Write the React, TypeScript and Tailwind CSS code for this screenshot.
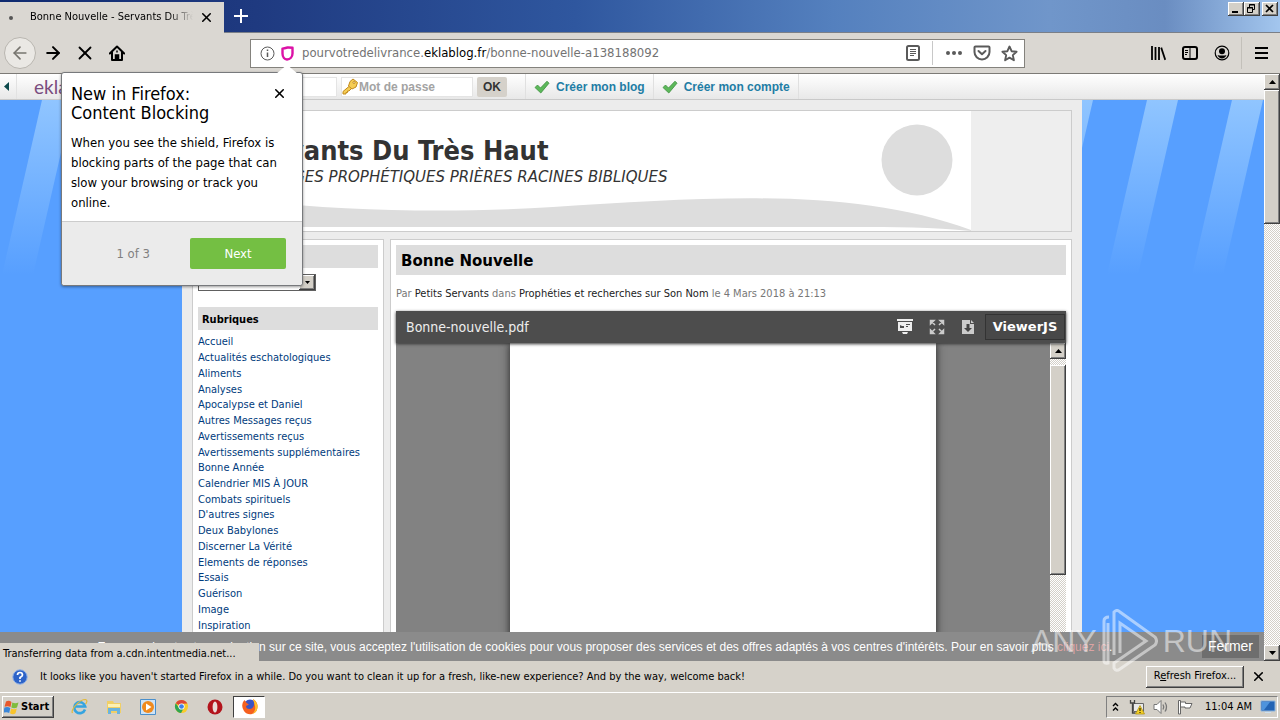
import React from 'react';
import { ArrowLeft, ArrowRight, X } from 'lucide-react';

const RAISED =
  'bg-[#d4d0c8] shadow-[inset_-1px_-1px_#404040,inset_1px_1px_#fff,inset_-2px_-2px_#808080]';

const CATEGORIES = [
  'Accueil',
  'Actualités eschatologiques',
  'Aliments',
  'Analyses',
  'Apocalypse et Daniel',
  'Autres Messages reçus',
  'Avertissements reçus',
  'Avertissements supplémentaires',
  'Bonne Année',
  'Calendrier MIS À JOUR',
  'Combats spirituels',
  "D'autres signes",
  'Deux Babylones',
  'Discerner La Vérité',
  'Elements de réponses',
  'Essais',
  'Guérison',
  'Image',
  'Inspiration',
];

interface ScrollbarProps {
  thumb: string;
  bottomArrow?: boolean;
}

const Scrollbar: React.FC<ScrollbarProps> = ({ thumb, bottomArrow }) => (
  <div className="flex w-4 shrink-0 flex-col bg-[conic-gradient(#fff_25%,#d4d0c8_0_50%,#fff_0_75%,#d4d0c8_0)] bg-size-[2px_2px]">
    <button aria-label="Scroll up" className={`flex h-4 w-full shrink-0 items-center justify-center ${RAISED}`}>
      <svg width="7" height="4" viewBox="0 0 7 4"><path d="M3.5 0 7 4H0z" /></svg>
    </button>
    <div className={`w-full ${thumb} ${RAISED}`} />
    {bottomArrow && (
      <button aria-label="Scroll down" className={`mt-auto flex h-4 w-full shrink-0 items-center justify-center ${RAISED}`}>
        <svg width="7" height="4" viewBox="0 0 7 4"><path d="M3.5 4 7 0H0z" /></svg>
      </button>
    )}
  </div>
);

const TitleBar: React.FC = () => (
  <header className="flex h-[33px] shrink-0 border-b border-[#7a7f88] bg-[linear-gradient(90deg,#0f2a70_0%,#1f3a80_20%,#2f579f_45%,#5480be_65%,#7096ca_82%,#6a8dc1_91%,#a3c6ee_100%)]">
    <div className="mt-[2px] flex h-[31px] w-[224px] items-center bg-[#dad7d2] pr-[10px] pl-[9px] text-[11px]">
      <span className="mr-[17px] size-1 rounded-full bg-[#555]" />
      <span className="flex-1 overflow-hidden whitespace-nowrap [mask-image:linear-gradient(90deg,#000_85%,transparent)]">
        Bonne Nouvelle - Servants Du Très Haut
      </span>
      <button aria-label="Close tab" className="ml-[6px]">
        <X size={15} strokeWidth={2.5} />
      </button>
    </div>
    <button aria-label="New tab" className="flex w-[33px] items-center justify-center text-white">
      <svg width="14" height="14" viewBox="0 0 14 14" stroke="currentColor" strokeWidth="2"><path d="M7 0v14M0 7h14" /></svg>
    </button>
    <div className="ml-auto flex pt-[2px] pr-[2px]">
      <button aria-label="Minimize" className={`flex h-[14px] w-4 items-center justify-center ${RAISED}`}>
        <svg width="16" height="14" viewBox="0 0 16 14"><path d="M4 9h6v2H4z" /></svg>
      </button>
      <button aria-label="Restore" className={`flex h-[14px] w-4 items-center justify-center ${RAISED}`}>
        <svg width="16" height="14" viewBox="0 0 16 14" fill="none" stroke="#000">
          <path d="M5.500 5V2.500h5v5H9M5 3h6M3.500 5.500h5v5h-5zM3 6h6" />
        </svg>
      </button>
      <button aria-label="Close" className={`ml-[2px] flex h-[14px] w-4 items-center justify-center ${RAISED}`}>
        <svg width="16" height="14" viewBox="0 0 16 14" stroke="#000" strokeWidth="1.700"><path d="m4 3 7 7M11 3l-7 7" /></svg>
      </button>
    </div>
  </header>
);

const NavBar: React.FC = () => (
  <nav className="flex h-[41px] shrink-0 items-center border-b border-[#7c7a76] bg-[#dad7d2] pl-1">
    <button aria-label="Back" className="flex size-8 items-center justify-center rounded-full border border-[#b9b6b0] bg-[#eae8e4] text-[#77756f]">
      <ArrowLeft size={20} />
    </button>
    <button aria-label="Forward" className="ml-[7px]"><ArrowRight size={20} strokeWidth={2.400} /></button>
    <button aria-label="Stop" className="ml-[11px]"><X size={22} strokeWidth={2} /></button>
    <button aria-label="Home" className="ml-[13px]">
      <svg width="16" height="16" viewBox="0 0 16 16" fill="none" stroke="#000" strokeWidth="2">
        <path d="M.800 8.500 8 1.500l7.200 7M3 7v8h10V7" strokeLinejoin="round" strokeLinecap="round" />
        <path d="M6.500 14.500V10h3v4.500zM8 5.500v2" fill="#000" strokeWidth="1.500" />
      </svg>
    </button>

    <div className="ml-[125px] flex h-[29px] min-w-0 flex-1 items-center border border-[#84827d] bg-white pr-[6px] pl-[9px] text-[#5a5a5a]">
      <svg width="15" height="15" viewBox="0 0 15 15" fill="none" stroke="currentColor">
        <circle cx="7.500" cy="7.500" r="6.500" /><path d="M7.500 6.500v4.500M7.500 3.500v1.600" strokeWidth="1.500" />
      </svg>
      <svg className="ml-[6px]" width="13" height="15" viewBox="0 0 13 15" fill="none" stroke="#dc11a6" strokeWidth="2.400" strokeLinejoin="round">
        <path d="M6.500 1.500C4.600 2 3 2.400 1.500 2.600V7.500c0 3.500 2 5.800 4.500 6 3-.2 5.500-2.500 5.500-6V1.800C10 1.600 8.400 1.400 6.500 1.500z" />
      </svg>
      <a href="#" className="ml-[8px] flex-1 truncate text-[13px] text-[#737373]">
        pourvotredelivrance.<span className="text-black">eklablog.fr</span>/bonne-nouvelle-a138188092
      </a>
      <button aria-label="Reader view">
        <svg width="14" height="16" viewBox="0 0 14 16" fill="none" stroke="currentColor">
          <rect x="1" y="1" width="12" height="14" rx="1.500" strokeWidth="2" />
          <path d="M4 4.500h6M4 6.500h6M4 8.500h6M4 10.500h4" />
        </svg>
      </button>
      <span className="mx-[12px] h-6 w-px bg-[#c8c8c8]" />
      <button aria-label="Page actions">
        <svg width="18" height="16" viewBox="0 0 18 16" fill="currentColor">
          <circle cx="3" cy="8" r="2" /><circle cx="9" cy="8" r="2" /><circle cx="15" cy="8" r="2" />
        </svg>
      </button>
      <button aria-label="Save to Pocket" className="ml-[10px]">
        <svg width="18" height="16" viewBox="0 0 18 16" fill="none" stroke="currentColor" strokeWidth="2" strokeLinejoin="round" strokeLinecap="round">
          <path d="M2.500 1.500h13a1 1 0 0 1 1 1V7a7.500 7.500 0 0 1-15 0V2.500a1 1 0 0 1 1-1z" /><path d="m5.500 6 3.500 3.200L12.500 6" />
        </svg>
      </button>
      <button aria-label="Bookmark" className="ml-[10px]">
        <svg width="17" height="17" viewBox="0 0 17 17" fill="none" stroke="currentColor" strokeWidth="1.900" strokeLinejoin="round">
          <path d="m8.500 1.500 2.100 4.700 5 .5-3.800 3.400 1.100 5.100-4.400-2.600-4.400 2.600 1.100-5.100L1.400 6.700l5-.5z" />
        </svg>
      </button>
    </div>

    <div className="ml-[125px] flex items-center pr-[12px]">
      <button aria-label="Library">
        <svg width="16" height="16" viewBox="0 0 16 16" stroke="#000" strokeWidth="2" strokeLinecap="square">
          <path d="M2 2v12M5.500 3v11M9 3v11M11.500 3.500 15 14" strokeWidth="1.800" />
        </svg>
      </button>
      <button aria-label="Sidebars" className="ml-[16px]">
        <svg width="16" height="16" viewBox="0 0 16 16" fill="none" stroke="#000">
          <rect x="1" y="2" width="14" height="12" rx="2" strokeWidth="2" /><path d="M8 2v12M3 5.500h3M3 7.500h3M3 9.500h2" />
        </svg>
      </button>
      <button aria-label="Account" className="ml-[16px]">
        <svg width="16" height="16" viewBox="0 0 16 16">
          <circle cx="8" cy="8" r="6.800" fill="none" stroke="#000" strokeWidth="1.200" />
          <circle cx="8" cy="6.200" r="3" /><path d="M3.500 10c1.500.8 7.500.8 9 0-.8 2.400-2.500 3.400-4.500 3.400S4.300 12.400 3.500 10z" />
        </svg>
      </button>
      <span className="ml-[11px] h-8 w-px bg-[#c3c0ba]" />
      <button aria-label="Menu" className="ml-[13px]">
        <svg width="13" height="13" viewBox="0 0 13 13"><path d="M0 0h13v2H0zM0 5h13v2H0zM0 10h13v2H0z" /></svg>
      </button>
    </div>
  </nav>
);

const CheckIcon: React.FC = () => (
  <svg width="16" height="14" viewBox="0 0 16 14">
    <path d="M1 7.500 3.500 5l3 3L13 1.200 15 3.200 6.800 13z" fill="#5cb85a" stroke="#3c8f3e" strokeWidth=".800" />
  </svg>
);

const EklaBar: React.FC = () => (
  <div className="relative flex h-[26px] shrink-0 items-center border-b border-[#c9c9c9] bg-linear-to-b from-white to-[#e8e8e8] font-['Liberation_Sans',sans-serif] text-[12px] font-bold">
    <span className="flex h-full w-[17px] items-center border-r border-[#e2e2e2] pl-1">
      <svg width="5" height="9" viewBox="0 0 5 9"><path d="M5 0v9L0 4.500z" fill="#0d4a4c" /></svg>
    </span>
    <a href="#" className="ml-[17px] w-[119px] font-[Lato,sans-serif] text-[19px] leading-5 font-normal text-[#7a4d7e]">eklablog</a>
    <input aria-label="Identifiant" className="mr-1 ml-[53px] h-5 w-[131px] border border-[#e4e4e4] bg-white" />
    <label className="flex h-5 w-[132px] items-center border border-[#e4e4e4] bg-white">
      <svg className="shrink-0" width="17" height="17" viewBox="0 0 17 17" fill="#f5cd55" stroke="#c28a1c">
        <path d="M7.500 8 1 13.500V16h3v-1.500h1.500V13H7l2.500-2.500" />
        <path d="M8 3.500 11 1l4.500 3.500L14 9l-4 2-3.500-3z" /><circle cx="12" cy="4.500" r="1" fill="#fff" />
      </svg>
      <input type="password" aria-label="Mot de passe" placeholder="Mot de passe" className="w-full min-w-0 outline-none placeholder:text-[#a3a3a3]" />
    </label>
    <button className="ml-[4px] h-5 w-[30px] rounded-xs bg-[#d5d1ca] text-[#333]">OK</button>
    <div className="ml-[18px] flex h-full items-center border-l border-[#e0e0e0] text-[#1f7da5]">
      <a href="#" className="flex h-full items-center gap-[6px] border-r border-[#e0e0e0] px-2"><CheckIcon />Créer mon blog</a>
      <a href="#" className="flex h-full items-center gap-[6px] border-r border-[#e0e0e0] px-2"><CheckIcon />Créer mon compte</a>
    </div>
  </div>
);

const Stripes: React.FC = () => (
  <svg className="absolute top-0 left-0 h-[180px] w-full" aria-hidden="true">
    <defs>
      <linearGradient id="stripe" x1="0" y1="0" x2="0" y2="1">
        <stop offset="0" stopColor="#90c5ff" />
        <stop offset="1" stopColor="#90c5ff" stopOpacity="0" />
      </linearGradient>
    </defs>
    {Array.from({ length: 24 }, (_, i) => (
      <path key={i} d="M42 0h31L33 175H2z" transform={`translate(${i * 85})`} fill="url(#stripe)" />
    ))}
  </svg>
);

const BlogHeader: React.FC = () => (
  <div className="relative h-[122px] shrink-0 border border-[#ccc] bg-[#eee]">
    <svg className="absolute top-0 left-0" width="778" height="120" viewBox="0 0 778 120" aria-hidden="true">
      <path d="M0 0h778v120H0z" fill="#fff" />
      <path d="M0 84C120 98 230 104 360 96 520 86 660 76 778 119v1C740 116 700 116 660 116H0z" fill="#ddd" />
      <circle cx="724" cy="49" r="35.500" fill="#ddd" />
    </svg>
    <div className="relative pt-[24px] pl-[49px] text-[#333]">
      <h1 className="text-[27px] leading-8 font-bold">Servants Du Très Haut</h1>
      <p className="font-['DejaVu_Sans',sans-serif] text-[15px] leading-5 italic">MESSAGES PROPHÉTIQUES PRIÈRES RACINES BIBLIQUES</p>
    </div>
  </div>
);

const Sidebar: React.FC = () => (
  <aside className="w-[192px] shrink-0 border border-[#ccc] bg-white p-[5px]">
    <h2 className="h-[23px] bg-[#ddd] px-1 text-[11px] leading-[26px] font-bold">Archives</h2>
    <div className="relative mt-[6px] h-[17px] w-[118px]">
      <select aria-label="Archives" className="block h-[17px] w-full appearance-none border border-[#606060] bg-white px-1 text-[11px] leading-[15px]">
        <option>Choisir le mois</option>
      </select>
      <span className={`pointer-events-none absolute top-px right-px flex h-[15px] w-4 items-center justify-center ${RAISED}`}>
        <svg width="5" height="3" viewBox="0 0 5 3"><path d="M0 0h5L2.500 3z" /></svg>
      </span>
    </div>
    <h2 className="mt-[16px] h-[23px] bg-[#ddd] px-1 text-[11px] leading-[26px] font-bold">Rubriques</h2>
    <ul className="mt-1 grid h-[299px] auto-rows-fr items-center text-[11px] leading-none whitespace-nowrap text-[#003b7d]">
      {CATEGORIES.map((name) => (
        <li key={name}><a href="#">{name}</a></li>
      ))}
    </ul>
  </aside>
);

const PdfViewer: React.FC = () => (
  <div className="mt-2 flex min-h-0 flex-1 flex-col">
    <div className="z-10 flex h-8 shrink-0 items-center bg-[#4d4d4d] pr-px pl-[10px] text-white shadow-[0_1px_3px_#333]">
      <span className="flex-1 text-[14px] text-[#eee]">Bonne-nouvelle.pdf</span>
      <button aria-label="Presentation">
        <svg width="16" height="16" viewBox="0 0 16 16" fill="#eee">
          <path d="M0 0h16v2H0zM1 3h14v9H1zM5 13h6l-1 2H6z" /><path d="M3 6v3h4V7H5zM9 5h4v1H9zM9 7h2v1H9z" fill="#4d4d4d" />
        </svg>
      </button>
      <button aria-label="Fullscreen" className="ml-[16px]">
        <svg width="16" height="16" viewBox="0 0 16 16" fill="#ccc" stroke="#ccc" strokeWidth="1.500">
          <path d="M1.500 5V1.500H5zM11 1.500h3.500V5zM1.500 11v3.500H5zM14.500 11v3.500H11zM2 2l4 4M14 2l-4 4M2 14l4-4M14 14l-4-4" />
        </svg>
      </button>
      <button aria-label="Download" className="ml-[16px]">
        <svg width="14" height="16" viewBox="0 0 14 16" fill="#ccc">
          <path d="M1 1h8v4h4v10H1zM10 1l3 3h-3z" /><path d="M5.500 5h3v4H11l-4 4-4-4h2.500z" fill="#444" />
        </svg>
      </button>
      <button className="ml-[10px] h-[26px] w-20 border border-[#333] bg-[#484848] font-['DejaVu_Sans',sans-serif] text-[13px] font-bold">ViewerJS</button>
    </div>
    <div className="flex min-h-0 flex-1 bg-[#828282]">
      <div className="flex flex-1 justify-center overflow-hidden">
        <div className="w-[426px] bg-white shadow-[0_0_8px_#222]" />
      </div>
      <Scrollbar thumb="mt-[6px] h-[210px]" />
    </div>
  </div>
);

const Article: React.FC = () => (
  <main className="ml-[6px] flex min-h-0 min-w-0 flex-1 flex-col border border-[#ccc] bg-white px-[5px] pt-[5px]">
    <h2 className="h-[30px] shrink-0 bg-[#ddd] px-[5px] font-['DejaVu_Sans',sans-serif] text-[15px] leading-[32px] font-bold">Bonne Nouvelle</h2>
    <p className="mt-[10px] text-[11px] leading-[18px] text-[#777]">
      Par <a href="#" className="text-[#222]">Petits Servants</a> dans{' '}
      <a href="#" className="text-[#222]">Prophéties et recherches sur Son Nom</a> le 4 Mars 2018 à 21:13
    </p>
    <PdfViewer />
  </main>
);

const CookieBar: React.FC = () => (
  <div className="absolute inset-x-0 bottom-0 flex h-[29px] items-center justify-center bg-[#8b8b8b] pr-[54px] font-['Liberation_Sans',sans-serif] text-[12px] text-white">
    <p className="whitespace-nowrap">
      En poursuivant votre navigation sur ce site, vous acceptez l'utilisation de cookies pour vous proposer des services et des
      offres adaptés à vos centres d'intérêts. Pour en savoir plus <a href="#" className="text-[#dba3a3]">cliquez ici</a>.
    </p>
    <button className="absolute right-[5px] h-[23px] bg-[#6e6e6e] px-[6px] text-[14px]">Fermer</button>
  </div>
);

const Popup: React.FC = () => (
  <div role="dialog" aria-labelledby="tour-title" className="absolute top-[72px] left-[61px] z-30 w-[242px] rounded-[3px] border border-[#77797c] bg-white shadow-[0_1px_3px_#0006]">
    <svg className="absolute -top-[9px] left-[214px]" width="22" height="11" viewBox="0 0 22 11">
      <path d="M0 10 11 .700 22 10v1H0z" fill="#fff" />
    </svg>
    <div className="px-[9px] pt-[11px] pb-2">
      <div className="flex items-start justify-between">
        <h2 id="tour-title" className="text-[18px] leading-[19px]">New in Firefox:<br />Content Blocking</h2>
        <button aria-label="Close" className="mt-[2px] mr-[6px]"><X size={15} strokeWidth={2.500} /></button>
      </div>
      <p className="mt-[11px] text-[13px] leading-5">
        When you see the shield, Firefox is<br />blocking parts of the page that can<br />slow your browsing or track you<br />online.
      </p>
    </div>
    <div className="flex h-[64px] items-center justify-end rounded-b-[3px] border-t border-[#ccc] bg-[#ebebeb] pr-4 text-[13px]">
      <span className="mr-[40px] text-[#808080]">1 of 3</span>
      <button className="h-[31px] w-24 rounded-xs bg-[#74bf43] text-white">Next</button>
    </div>
  </div>
);

const Watermark: React.FC = () => (
  <div className="pointer-events-none absolute right-[48px] bottom-[47px] z-40 flex items-center gap-[5px] font-['Liberation_Sans',sans-serif] text-[32px] leading-[64px] text-white/50">
    <span>ANY</span>
    <svg width="56" height="64" viewBox="0 0 56 64" fill="none" stroke="currentColor" strokeWidth="3">
      <path d="M12 46V3q3-3 6 0l35 25q3 4 0 8L18 60q-4 3-6-1v-5l32-22-26-18v30M7 8q-5 0-5 4v40q0 3 4 2V14" />
    </svg>
    <span>RUN</span>
  </div>
);

const InfoBar: React.FC = () => (
  <div className="flex h-[31px] shrink-0 items-center bg-[#d6d2ca] pr-[14px] pl-[12px] text-[11px]">
    <svg width="16" height="16" viewBox="0 0 16 16">
      <circle cx="8" cy="8" r="7.200" fill="#2d63c8" stroke="#8fb0e6" />
      <path d="M5.500 6q0-2.500 2.500-2.500T10.500 6Q10.500 7.200 8 8.500V10M8 11.200v1.600" fill="none" stroke="#fff" strokeWidth="1.700" />
    </svg>
    <p className="ml-[12px] flex-1 pt-[2px] whitespace-nowrap">
      It looks like you haven't started Firefox in a while. Do you want to clean it up for a fresh, like-new experience? And by the way, welcome back!
    </p>
    <button className={`h-[22px] w-[98px] whitespace-nowrap ${RAISED}`}>R<u>e</u>fresh Firefox...</button>
    <button aria-label="Dismiss" className="ml-[7px]"><X size={15} strokeWidth={2.500} /></button>
  </div>
);

const Taskbar: React.FC = () => (
  <footer className="flex h-[28px] shrink-0 items-center border-t border-white bg-[#d4d0c8] px-[2px] text-[11px]">
    <button className={`flex h-[22px] w-[52px] items-center gap-[2px] pt-px pl-[2px] font-bold ${RAISED}`}>
      <svg width="15" height="15" viewBox="0 0 15 15">
        <path d="M2 1.500Q5 0 7.500 2L6.500 7Q4 5.500.500 6.700z" fill="#e8582c" /><path d="M8.300 2.400Q11 4 14.500 2.500L13 7.500Q10 9 7.300 7.400z" fill="#7fbc3c" />
        <path d="M.400 7.600Q3.500 6.200 6.300 8L5.200 13Q3 11.500-.500 12.700z" fill="#3a86d8" /><path d="M7.200 8.400Q9.500 10 12.800 8.500L11.500 13.300Q9 15 6 13.300z" fill="#f8c42c" />
      </svg>
      Start
    </button>
    <div className="ml-[17px] flex items-center gap-[18px]">
      <button aria-label="Internet Explorer">
        <svg width="17" height="17" viewBox="0 0 17 17" fill="none">
          <path d="M14 11.500A5.500 5.500 0 1 1 14.200 8.500H4" stroke="#35a4e0" strokeWidth="2.600" />
          <path d="M1.500 15C-.500 12 8 1.500 14.500 1.500 17 2 15.500 5 14.500 6" stroke="#e2b93a" strokeWidth="1.200" />
        </svg>
      </button>
      <button aria-label="Explorer">
        <svg width="16" height="16" viewBox="0 0 16 16">
          <path d="M1 2h6l1 2h7v10H1z" fill="#f0cf67" /><path d="M2 5h12v3H2z" fill="#fdf1b4" /><path d="M2 15V9h12v6h-3v-3H5v3z" fill="#6bb3de" />
        </svg>
      </button>
      <button aria-label="Media Player">
        <svg width="16" height="16" viewBox="0 0 16 16">
          <path d="M.500.500h15v15H.500z" fill="#cfe3f5" stroke="#4a8fcb" /><circle cx="8" cy="8" r="6" fill="#f08a1d" /><path d="m6 4.500 5.500 3.500L6 11.500z" fill="#fff" />
        </svg>
      </button>
      <button aria-label="Chrome">
        <svg width="15" height="15" viewBox="0 0 16 16">
          <circle cx="8" cy="8" r="7" fill="#f9cb2b" /><path d="M8 8 1.900 4.500A7 7 0 0 1 14.200 4.800L8 5z" fill="#dd4538" />
          <path d="M1.900 4.500A7 7 0 0 0 7.500 15l3-5.500L5 9z" fill="#2fa552" /><circle cx="8" cy="8" r="3.300" fill="#fff" /><circle cx="8" cy="8" r="2.500" fill="#3f7fe8" />
        </svg>
      </button>
      <button aria-label="Opera">
        <svg width="16" height="16" viewBox="0 0 16 16"><circle cx="8" cy="8" r="7.500" fill="#b3141c" /><ellipse cx="8" cy="8" rx="2.400" ry="5.500" fill="#e9dcd8" /></svg>
      </button>
    </div>
    <button aria-label="Firefox" className="ml-[10px] flex h-[22px] w-8 items-center justify-center border border-t-[#404040] border-r-white border-b-white border-l-[#404040] bg-white">
      <svg width="17" height="17" viewBox="0 0 17 17">
        <circle cx="9" cy="8" r="6.500" fill="#3b55c4" />
        <path d="M2 4Q0 9 3 13t8 3 5.500-7Q17 4 12 1q1.500 3 1 6-1 4-4.500 4T5 8l3-1.500Q5 5 3.500 2z" fill="#f5601f" /><path d="M12 1q4.500 3 4.500 8T11 16q4-3 3-8z" fill="#fdc22c" />
      </svg>
    </button>

    <div className="ml-auto flex h-[22px] items-center border border-t-[#808080] border-r-white border-b-white border-l-[#808080] pr-px pl-[5px]">
      <svg width="7" height="10" viewBox="0 0 7 10" fill="none" stroke="#000" strokeWidth="1.400"><path d="m1 4 2.500-2.500L6 4M1 8.500 3.500 6 6 8.500" /></svg>
      <svg className="ml-[10px]" width="16" height="16" viewBox="0 0 16 16">
        <path d="M4.500 4.500h10v8h-10z" fill="#e9e9e9" stroke="#666" /><path d="M1.500 1v3h4V1M3.500 4v10h3" fill="none" stroke="#444" strokeWidth="1.300" />
        <path d="m11 6.500 4.500 8.500h-9z" fill="#f4cf27" stroke="#a98b08" strokeWidth=".700" /><path d="M10.500 9h1v3h-1zM10.500 13h1v1h-1z" />
      </svg>
      <svg className="ml-[8px]" width="16" height="16" viewBox="0 0 16 16" fill="none" stroke="#777">
        <path d="M1 5.500h3l4-4v13l-4-4H1z" fill="#fff" /><path d="M10 5.500q1.500 2.500 0 5M12 3.500q3 4.500 0 9" strokeWidth="1.300" />
      </svg>
      <svg className="ml-[8px]" width="16" height="16" viewBox="0 0 16 16" fill="#fff" stroke="#666"><path d="M1.500 1.500h2V15h-2zM3.500 3h5v1.500h6.500l-2 4.500H8V8H3.500z" /></svg>
      <time className="mr-2 ml-[12px] pt-px whitespace-nowrap">11:04 AM</time>
      <svg width="16" height="14" viewBox="0 0 16 14"><path d="M1 1h14v10H1z" fill="#2263b4" stroke="#8cb4dd" /><path d="M2 2h8L4 10H2z" fill="#4d93dd" /><path d="M5 12h6v1H5z" fill="#cfe0ee" /></svg>
    </div>
  </footer>
);

const App: React.FC = () => {
  return (
    <div className="relative flex h-screen flex-col overflow-hidden bg-[#d4d0c8] font-['DejaVu_Sans_Condensed','DejaVu_Sans',sans-serif] text-black">
      <TitleBar />
      <NavBar />
      <div className="relative flex min-h-0 flex-1">
        <div className="relative flex min-w-0 flex-1 flex-col overflow-hidden">
          <EklaBar />
          <div className="relative flex min-h-0 flex-1 justify-center bg-[#579fff]">
            <Stripes />
            <div className="relative flex w-[900px] flex-col bg-[#ececec] px-[10px] pt-[10px]">
              <BlogHeader />
              <div className="mt-[7px] flex min-h-0 flex-1">
                <Sidebar />
                <Article />
              </div>
            </div>
          </div>
          <CookieBar />
        </div>
        <Scrollbar thumb="h-[134px]" bottomArrow />
        <div className="absolute bottom-0 left-0 h-[18px] w-[259px] bg-[#d6d2ca] pl-[3px] text-[11px] leading-[22px]">
          Transferring data from a.cdn.intentmedia.net...
        </div>
      </div>
      <InfoBar />
      <Taskbar />
      <Popup />
      <Watermark />
    </div>
  );
};

export default App;
